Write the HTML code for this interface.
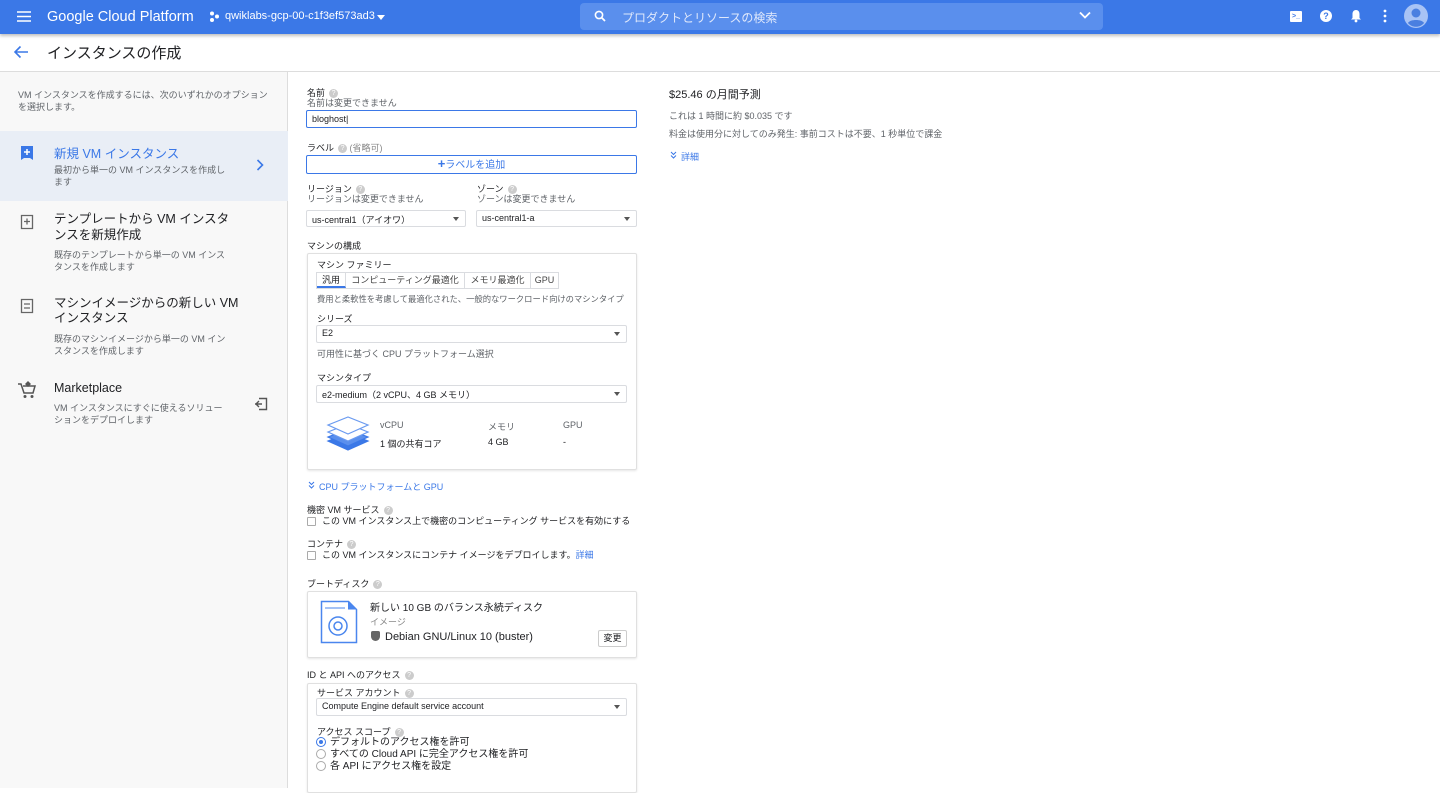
<!DOCTYPE html>
<html><head><meta charset="utf-8"><style>
*{box-sizing:border-box;margin:0;padding:0}
body{width:1440px;height:788px;overflow:hidden;background:#fff;font-family:"Liberation Sans","Noto Sans CJK JP",sans-serif;color:#202124;position:relative}
.a{position:absolute;white-space:nowrap}
.s{font-size:9px;color:#5f6368}
.l{font-size:9px;color:#202124}
.q{display:inline-block;width:9px;height:9px;border-radius:50%;background:#ccc;color:#fff;font-size:7px;text-align:center;line-height:9px;vertical-align:middle;margin-left:4px}
.sel{position:absolute;height:17px;border:1px solid #dadce0;border-radius:2px;font-size:9px;padding:2px 5px;background:#fff}
.sel:after{content:"";position:absolute;right:6px;top:6px;border:3.5px solid transparent;border-top:4px solid #555}
.box{position:absolute;border:1px solid #e0e0e0;border-radius:2px;box-shadow:0 1px 2px rgba(0,0,0,.1)}
.cb{display:inline-block;width:9px;height:9px;border:1px solid #aaa;border-radius:1px;vertical-align:middle;margin-right:6px}
.rd{display:inline-block;width:10px;height:10px;border:1px solid #aaa;border-radius:50%;vertical-align:middle;margin-right:4px;position:relative}
.t{font-size:12.5px}
</style></head><body>
<div class="a" style="left:0;top:0;width:1440px;height:34px;background:#3b78e7;box-shadow:0 2px 3px rgba(0,0,0,.25)"></div>
<svg class="a" style="left:16px;top:10px" width="16" height="13"><path d="M1 2h14M1 6.5h14M1 11h14" stroke="#fff" stroke-width="1.6"/></svg>
<div class="a" style="left:47px;top:9px;color:#fff;font-size:14.5px">Google Cloud Platform</div>
<svg class="a" style="left:209px;top:11px" width="11" height="11"><circle cx="3" cy="2.5" r="2" fill="#fff"/><circle cx="8" cy="5.5" r="2" fill="#fff"/><circle cx="3" cy="9" r="2" fill="#fff"/></svg>
<div class="a" style="left:225px;top:10px;color:#fff;font-size:11px">qwiklabs-gcp-00-c1f3ef573ad3</div>
<div class="a" style="left:377px;top:15px;border:4px solid transparent;border-top:5px solid #fff"></div>
<div class="a" style="left:580px;top:3px;width:523px;height:27px;background:#5a8fed;border-radius:4px"></div>
<svg class="a" style="left:594px;top:10px" width="12" height="12"><circle cx="5" cy="5" r="3.6" stroke="#fff" stroke-width="1.6" fill="none"/><path d="M7.5 7.5l3.5 3.5" stroke="#fff" stroke-width="1.8"/></svg>
<div class="a" style="left:622px;top:9px;color:#dfe8fb;font-size:12px">プロダクトとリソースの検索</div>
<svg class="a" style="left:1079px;top:11px" width="12" height="9"><path d="M1 1.5l5 5 5-5" stroke="#fff" stroke-width="1.8" fill="none"/></svg>
<div class="a" style="left:1290px;top:11px;width:12px;height:11px;background:#fff;border-radius:1px"></div>
<div class="a" style="left:1292px;top:13px;font-size:7px;color:#3b78e7;font-weight:bold">&gt;_</div>
<div class="a" style="left:1320px;top:10px;width:12px;height:12px;background:#fff;border-radius:50%;font-size:9px;color:#3b78e7;text-align:center;line-height:12px;font-weight:bold">?</div>
<svg class="a" style="left:1350px;top:9px" width="12" height="14"><path d="M6 1C3.5 1 2.5 3 2.5 5v4L1 10.5h10L9.5 9V5C9.5 3 8.5 1 6 1z" fill="#fff"/><circle cx="6" cy="12" r="1.4" fill="#fff"/></svg>
<svg class="a" style="left:1383px;top:9px" width="4" height="14"><circle cx="2" cy="2" r="1.4" fill="#fff"/><circle cx="2" cy="7" r="1.4" fill="#fff"/><circle cx="2" cy="12" r="1.4" fill="#fff"/></svg>
<svg class="a" style="left:1404px;top:4px" width="24" height="24"><circle cx="12" cy="12" r="12" fill="#a8c3f5"/><circle cx="12" cy="9" r="4.5" fill="#4a7fe0"/><path d="M4 19c2-4 14-4 16 0-4 5-12 5-16 0z" fill="#4a7fe0"/></svg>
<svg class="a" style="left:13px;top:45px" width="16" height="14"><path d="M15 7H2M7.5 1.5L2 7l5.5 5.5" stroke="#3b78e7" stroke-width="1.6" fill="none"/></svg>
<div class="a" style="left:47px;top:42px;font-size:15px">インスタンスの作成</div>
<div class="a" style="left:0;top:71px;width:1440px;height:1px;background:#ddd"></div>
<div class="a" style="left:0;top:72px;width:288px;height:716px;background:#f8f8f8;border-right:1px solid #ddd"></div>
<div class="a s" style="left:18px;top:89px;line-height:12px">VM インスタンスを作成するには、次のいずれかのオプション<br>を選択します。</div>
<div class="a" style="left:0;top:131px;width:288px;height:70px;background:#e9eef6"></div>
<svg class="a" style="left:20px;top:145px" width="14" height="16"><path d="M1 1h12v14l-3-2H4l-3 2z" fill="#3b78e7"/><path d="M7 4v6M4 7h6" stroke="#fff" stroke-width="1.5"/></svg>
<div class="a t" style="left:54px;top:143px;color:#3b78e7">新規 VM インスタンス</div>
<div class="a s" style="left:54px;top:164px;line-height:12px">最初から単一の VM インスタンスを作成し<br>ます</div>
<svg class="a" style="left:256px;top:159px" width="8" height="12"><path d="M1.5 1l5 5-5 5" stroke="#3b78e7" stroke-width="1.6" fill="none"/></svg>
<svg class="a" style="left:20px;top:214px" width="14" height="16"><path d="M1.5 1.5h11v13H1.5z" stroke="#666" stroke-width="1.3" fill="none"/><path d="M7 4.5v6M4 7.5h6" stroke="#666" stroke-width="1.3"/></svg>
<div class="a t" style="left:54px;top:211px;line-height:16px">テンプレートから VM インスタ<br>ンスを新規作成</div>
<div class="a s" style="left:54px;top:249px;line-height:12px">既存のテンプレートから単一の VM インス<br>タンスを作成します</div>
<svg class="a" style="left:20px;top:298px" width="14" height="16"><path d="M1.5 1.5h11v13H1.5z" stroke="#666" stroke-width="1.3" fill="none"/><path d="M4 6h6M4 10h6" stroke="#666" stroke-width="1.3"/></svg>
<div class="a t" style="left:54px;top:296px;line-height:15px">マシンイメージからの新しい VM<br>インスタンス</div>
<div class="a s" style="left:54px;top:333px;line-height:12px">既存のマシンイメージから単一の VM イン<br>スタンスを作成します</div>
<svg class="a" style="left:17px;top:380px" width="20" height="20"><path d="M1 4h3l3 9h9l2-7H6" stroke="#555" stroke-width="1.5" fill="none"/><circle cx="8" cy="16.5" r="1.5" fill="#555"/><circle cx="15" cy="16.5" r="1.5" fill="#555"/><path d="M11 1l3 3-3 3-3-3z" fill="#555"/></svg>
<div class="a t" style="left:54px;top:381px">Marketplace</div>
<div class="a s" style="left:54px;top:402px;line-height:12px">VM インスタンスにすぐに使えるソリュー<br>ションをデプロイします</div>
<svg class="a" style="left:254px;top:397px" width="14" height="14"><path d="M5 1.5h7.5v11H5M1 7h7M5 4l-3 3 3 3" stroke="#555" stroke-width="1.4" fill="none"/></svg>

<div class="a l" style="left:307px;top:86px">名前<span class="q">?</span></div>
<div class="a s" style="left:307px;top:96px">名前は変更できません</div>
<div class="a" style="left:306px;top:110px;width:331px;height:18px;border:1.5px solid #3b78e7;border-radius:2px;font-size:9px;padding:3px 5px">bloghost|</div>
<div class="a l" style="left:307px;top:141px">ラベル<span class="q">?</span><span style="color:#888"> (省略可)</span></div>
<div class="a" style="left:306px;top:155px;width:331px;height:19px;border:1.5px solid #3b78e7;border-radius:2px;font-size:10px;color:#3b78e7;text-align:center;line-height:16px"><b style="font-size:13px">+</b>ラベルを追加</div>
<div class="a l" style="left:307px;top:182px">リージョン<span class="q">?</span></div>
<div class="a s" style="left:307px;top:192px">リージョンは変更できません</div>
<div class="a l" style="left:477px;top:182px">ゾーン<span class="q">?</span></div>
<div class="a s" style="left:477px;top:192px">ゾーンは変更できません</div>
<div class="sel" style="left:306px;top:210px;width:160px">us-central1（アイオワ）</div>
<div class="sel" style="left:476px;top:210px;width:161px">us-central1-a</div>
<div class="a l" style="left:307px;top:239px">マシンの構成</div>
<div class="box" style="left:307px;top:253px;width:330px;height:217px"></div>
<div class="a l" style="left:317px;top:258px">マシン ファミリー</div>
<div class="a" style="left:316px;top:272px;width:243px;height:17px;border:1px solid #dadce0;font-size:9px;color:#444;display:flex">
<div style="width:29px;text-align:center;line-height:15px;border-bottom:2px solid #3b78e7;border-right:1px solid #dadce0;color:#202124">汎用</div>
<div style="width:119px;text-align:center;line-height:15px;border-right:1px solid #dadce0">コンピューティング最適化</div>
<div style="width:66px;text-align:center;line-height:15px;border-right:1px solid #dadce0">メモリ最適化</div>
<div style="flex:1;text-align:center;line-height:15px">GPU</div></div>
<div class="a s" style="left:317px;top:293px;font-size:8.3px">費用と柔軟性を考慮して最適化された、一般的なワークロード向けのマシンタイプ</div>
<div class="a l" style="left:317px;top:312px">シリーズ</div>
<div class="sel" style="left:316px;top:325px;width:311px;height:18px">E2</div>
<div class="a s" style="left:317px;top:347px">可用性に基づく CPU プラットフォーム選択</div>
<div class="a l" style="left:317px;top:371px">マシンタイプ</div>
<div class="sel" style="left:316px;top:385px;width:311px;height:18px">e2-medium（2 vCPU、4 GB メモリ）</div>
<svg class="a" style="left:326px;top:412px" width="44" height="46"><g stroke-width="1.2"><path d="M22 24l20-9-20-8-20 8z" fill="#3b78e7" stroke="#3b78e7" transform="translate(0,14)"/><path d="M22 24l20-9-20-8-20 8z" fill="#5a8fed" stroke="#3b78e7" transform="translate(0,10)"/><path d="M22 24l20-9-20-8-20 8z" fill="#fff" stroke="#6a9af0" transform="translate(0,5)"/><path d="M22 24l20-9-20-8-20 8z" fill="#fff" stroke="#6a9af0" transform="translate(0,-2)"/></g></svg>
<div class="a s" style="left:380px;top:420px">vCPU</div>
<div class="a s" style="left:488px;top:420px">メモリ</div>
<div class="a s" style="left:563px;top:420px">GPU</div>
<div class="a l" style="left:380px;top:437px">1 個の共有コア</div>
<div class="a l" style="left:488px;top:437px">4 GB</div>
<div class="a l" style="left:563px;top:437px">-</div>
<svg class="a" style="left:308px;top:481px" width="7" height="8"><path d="M1 1l2.5 2.5L6 1M1 4.5L3.5 7 6 4.5" stroke="#3b78e7" fill="none"/></svg>
<div class="a" style="left:319px;top:480px;font-size:9px;color:#3b78e7">CPU プラットフォームと GPU</div>
<div class="a l" style="left:307px;top:503px">機密 VM サービス<span class="q">?</span></div>
<div class="a l" style="left:307px;top:514px"><span class="cb"></span>この VM インスタンス上で機密のコンピューティング サービスを有効にする</div>
<div class="a l" style="left:307px;top:537px">コンテナ<span class="q">?</span></div>
<div class="a l" style="left:307px;top:548px"><span class="cb"></span>この VM インスタンスにコンテナ イメージをデプロイします。<span style="color:#3b78e7">詳細</span></div>
<div class="a l" style="left:307px;top:577px">ブートディスク<span class="q">?</span></div>
<div class="box" style="left:307px;top:591px;width:330px;height:67px"></div>
<svg class="a" style="left:320px;top:600px" width="38" height="44"><path d="M1.5 1.5h27l8 8v33h-35z" fill="#fff" stroke="#4a86ee" stroke-width="1.5"/><path d="M28 1.5v8h8z" fill="#4a86ee"/><path d="M5 8h20" stroke="#4a86ee"/><circle cx="18" cy="26" r="9" fill="none" stroke="#4a86ee" stroke-width="1.5"/><circle cx="18" cy="26" r="4" fill="none" stroke="#4a86ee" stroke-width="1.5"/></svg>
<div class="a" style="left:370px;top:599px;font-size:10px">新しい 10 GB のバランス永続ディスク</div>
<div class="a s" style="left:370px;top:615px;color:#888">イメージ</div>
<div class="a" style="left:371px;top:631px;font-size:11px"><span style="display:inline-block;width:9px;height:10px;background:#666;border-radius:2px 2px 5px 5px;vertical-align:-1px;margin-right:5px"></span>Debian GNU/Linux 10 (buster)</div>
<div class="a" style="left:598px;top:630px;width:29px;height:17px;border:1px solid #ccc;border-radius:2px;font-size:9px;text-align:center;line-height:15px">変更</div>
<div class="a l" style="left:307px;top:668px">ID と API へのアクセス<span class="q">?</span></div>
<div class="box" style="left:307px;top:683px;width:330px;height:110px"></div>
<div class="a l" style="left:317px;top:686px">サービス アカウント<span class="q">?</span></div>
<div class="sel" style="left:316px;top:698px;width:311px;height:18px">Compute Engine default service account</div>
<div class="a l" style="left:317px;top:725px">アクセス スコープ<span class="q">?</span></div>
<div class="a" style="left:316px;top:737px;font-size:10px;line-height:12px"><span class="rd" style="border-color:#3b78e7"><span style="position:absolute;left:2px;top:2px;width:4px;height:4px;border-radius:50%;background:#3b78e7"></span></span>デフォルトのアクセス権を許可<br><span class="rd"></span>すべての Cloud API に完全アクセス権を許可<br><span class="rd"></span>各 API にアクセス権を設定</div>
<div class="a" style="left:669px;top:86px;font-size:11px">$25.46 の月間予測</div>
<div class="a s" style="left:669px;top:109px">これは 1 時間に約 $0.035 です</div>
<div class="a s" style="left:669px;top:127px">料金は使用分に対してのみ発生: 事前コストは不要、1 秒単位で課金</div>
<svg class="a" style="left:670px;top:151px" width="7" height="8"><path d="M1 1l2.5 2.5L6 1M1 4.5L3.5 7 6 4.5" stroke="#3b78e7" fill="none"/></svg>
<div class="a" style="left:681px;top:150px;font-size:9px;color:#3b78e7">詳細</div>
</body></html>
